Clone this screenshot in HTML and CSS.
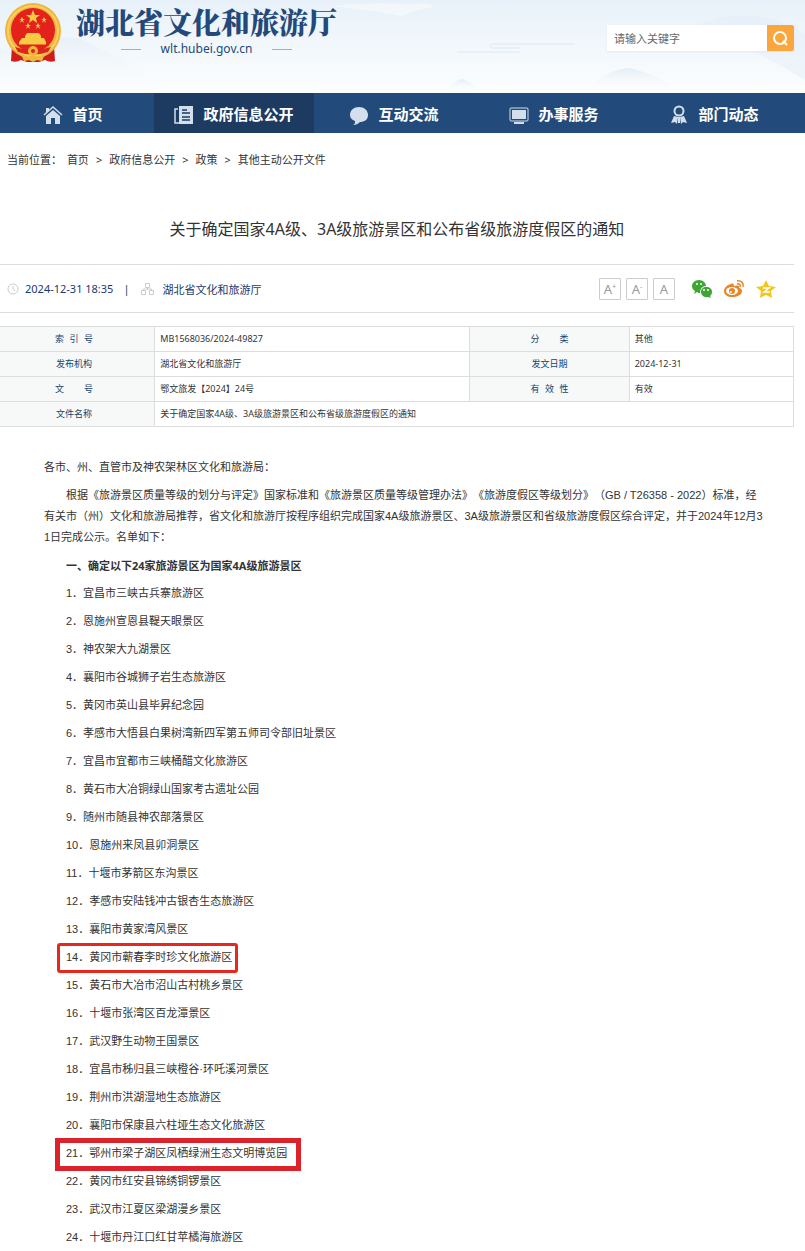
FILE: index.html
```
<!DOCTYPE html>
<html lang="zh-CN">
<head>
	<meta charset="UTF-8">
	<title>关于确定国家4A级、3A级旅游景区和公布省级旅游度假区的通知</title>
	<link rel="stylesheet" href="styles.css">
</head>
<body>
	<div class="header">
		<svg class="header-bg" viewBox="0 0 805 93" preserveAspectRatio="none" aria-hidden="true">
			<defs>
				<linearGradient id="sky" x1="0" y1="0" x2="0" y2="1">
					<stop offset="0" stop-color="#e8f1f9"/>
					<stop offset="0.55" stop-color="#f3f8fc"/>
					<stop offset="1" stop-color="#fcfefe"/>
				</linearGradient>
				<linearGradient id="hill" x1="0" y1="0" x2="0" y2="1">
					<stop offset="0" stop-color="#e3edf6"/>
					<stop offset="1" stop-color="#fafdfe" stop-opacity="0"/>
				</linearGradient>
			</defs>
			<rect width="805" height="93" fill="url(#sky)"/>
			<path d="M0 50Q40 34 78 38Q120 56 180 93H0z" fill="url(#hill)" opacity="0.6"/>
			<path d="M590 88Q605 70 630 68Q655 74 680 90z" fill="url(#hill)"/>
			<path d="M445 90Q455 80 462 79Q472 82 482 91z" fill="url(#hill)"/>
			<path d="M690 28Q750 0 805 34V80Q740 40 690 28z" fill="#e2ecf8" opacity="0.4"/>
			<path d="M330 6Q370 2 405 4Q440 2 430 8Q412 10 402 16Q370 10 330 6z" fill="#fff" opacity="0.4"/>
			<path d="M575 44H492Q487 46 492 48H520M457 52H520" fill="none" stroke="#e0e8ef"/>
		</svg>
		<a class="logo" href="#">
			<svg class="emblem" viewBox="0 0 56 60" aria-hidden="true">
				<path d="M7 43L6 58Q11 60 16 57L22 59H34L40 57Q45 60 50 58L49 43z" fill="#cf1d1c"/>
				<circle cx="28" cy="28" r="28" fill="#efb63f"/>
				<circle cx="28" cy="28" r="25" fill="none" stroke="#f9cf62" stroke-width="2"/>
				<circle cx="28" cy="27" r="22" fill="#e3231b"/>
				<path d="M28 7l2 5h5l-4 3 1 5-4-3-4 3 1-5-4-3h5z" fill="#f8ca45"/>
				<path d="M17 14l1 2h2l-2 1 1 3-2-2-2 2 1-3-2-1h2zM39 14l1 2h2l-2 1 1 3-2-2-2 2 1-3-2-1h2zM23 20l1 2h2l-2 1 1 3-2-2-2 2 1-3-2-1h2zM33 20l1 2h2l-2 1 1 3-2-2-2 2 1-3-2-1h2z" fill="#f8ca45"/>
				<path d="M20 33l2-3h12l2 3v2h3l2 4v3H14v-3l3-4h3z" fill="#f8ca45"/>
				<path d="M12 42h32" stroke="#e3231b"/>
				<path d="M10 44Q28 50 46 44L43 49Q28 54 13 49z" fill="#dd251c"/>
				<circle cx="28" cy="48" r="5" fill="#f1b63c"/>
				<circle cx="28" cy="48" r="2" fill="#dd251c"/>
				<path d="M16 51l7 3 5-2 5 2 7-3-3 7-5-1-4 2-4-2-5 1z" fill="#f1b63c"/>
			</svg>
			<span class="site">
				<strong>湖北省文化和旅游厅</strong>
				<span class="domain">wlt.hubei.gov.cn</span>
			</span>
		</a>
		<form class="search" action="#">
			<input type="text" placeholder="请输入关键字" aria-label="请输入关键字">
			<button type="button" aria-label="搜索">
				<svg width="17" height="17" viewBox="0 0 17 17"><circle cx="8" cy="8" r="6" fill="none" stroke="#fff" stroke-width="2"/><path d="M11 11l4 4" stroke="#fff" stroke-width="2"/></svg>
			</button>
		</form>
	</div>

	<div class="nav">
		<a href="#">
			<svg width="20" height="20" viewBox="0 0 20 20"><path d="M1 10L10 2l9 8" fill="none" stroke="#d3dfec" stroke-width="1.5"/><path d="M3 3h3v3L3 8zM3 11l7-6 7 6v8h-5v-6H8v6H3z" fill="#d3dfec"/></svg>
			首页
		</a>
		<a href="#" class="on">
			<svg width="20" height="20" viewBox="0 0 20 20"><path d="M4 4H1v14h4" fill="none" stroke="#d3dfec" stroke-width="1.5"/><path d="M5 1h14v18H5z" fill="#d3dfec"/><path d="M8 5h5M8 8h8M8 12h8M8 15h8" stroke="#1d3b61" stroke-width="1.5"/></svg>
			政府信息公开
		</a>
		<a href="#">
			<svg width="20" height="20" viewBox="0 0 20 20"><path d="M10 2c5 0 9 3 9 8s-4 7-8 7c-2 2-4 3-7 3 2-1 2-2 2-4-3-1-5-3-5-6 0-5 4-8 9-8z" fill="#d3dfec"/></svg>
			互动交流
		</a>
		<a href="#">
			<svg width="20" height="20" viewBox="0 0 20 20"><rect x="1" y="3" width="18" height="13" rx="1" fill="none" stroke="#d3dfec"/><path d="M3 5h14v9H3zM5 17h10v2H5z" fill="#d3dfec"/></svg>
			办事服务
		</a>
		<a href="#">
			<svg width="20" height="20" viewBox="0 0 20 20"><circle cx="10" cy="6" r="4.5" fill="none" stroke="#d3dfec" stroke-width="2"/><path d="M5 11l4 1-1 7-2-2-4 1zM15 11l-4 1 1 7 2-2 4 1zM9 12h2v6H9z" fill="#d3dfec"/></svg>
			部门动态
		</a>
	</div>

	<div class="main">
		<div class="crumb">
			<span>当前位置：</span>
			<a href="#">首页</a><i>&gt;</i><a href="#">政府信息公开</a><i>&gt;</i><a href="#">政策</a><i>&gt;</i><a href="#">其他主动公开文件</a>
		</div>
		<h1>关于确定国家4A级、3A级旅游景区和公布省级旅游度假区的通知</h1>

		<div class="info">
			<svg width="12" height="12" viewBox="0 0 12 12"><circle cx="6" cy="6" r="5" fill="none" stroke="#ccc"/><path d="M6 3v3l2 2" fill="none" stroke="#ccc"/></svg>
			<span class="date">2024-12-31 18:35</span>
			<span class="bar">|</span>
			<svg width="13" height="12" viewBox="0 0 13 12"><path d="M4.500.5h4v4h-4zM.5 7.500h4v4h-4zM8.500 7.500h4v4h-4zM6.500 5v2M2.500 7V6h8v1" fill="none" stroke="#ccc"/></svg>
			<span class="from">湖北省文化和旅游厅</span>
			<div class="tools">
				<button type="button">A<sup>+</sup></button>
				<button type="button">A<sup>-</sup></button>
				<button type="button">A</button>
			</div>
			<div class="share">
				<a href="#" aria-label="微信"><svg width="22" height="20" viewBox="0 0 22 20"><path d="M8 1c4 0 7 3 7 6-4 0-6 3-6 7-1 0-2 0-3-1l-3 2 1-3C2 11 1 9 1 7c0-3 3-6 7-6z" fill="#3fa535"/><path d="M15 8c4 0 6 2 6 5 0 2-1 3-2 4l1 2-3-1c-4 1-7-2-7-5s2-5 5-5z" fill="#3fa535"/><g fill="#fff"><circle cx="6" cy="5" r="1"/><circle cx="10" cy="5" r="1"/><circle cx="13" cy="11" r="1"/><circle cx="17" cy="11" r="1"/></g></svg></a>
				<a href="#" aria-label="微博"><svg width="22" height="20" viewBox="0 0 22 20"><path d="M8 5c2-1 3 0 3 2 3-1 6-1 5 2 2 0 3 2 3 3 0 4-5 6-10 6-4 0-8-2-8-6 0-3 3-6 7-7z" fill="#e6852a"/><ellipse cx="9" cy="12" rx="6" ry="4" fill="#fff"/><circle cx="9" cy="12" r="3" fill="#e6852a"/><circle cx="8" cy="13" r="1" fill="#fff"/><path d="M14 2c4-1 7 2 6 6M14 5c2-1 4 1 3 3" fill="none" stroke="#e6852a" stroke-width="1.500"/></svg></a>
				<a href="#" aria-label="QQ空间"><svg width="22" height="20" viewBox="0 0 22 20"><path d="M11 1l3 6 7 1-5 4 1 7-6-3-6 3 1-7-5-4 7-1z" fill="#f5c51f"/><path d="M8 9h6l-5 4h6" fill="none" stroke="#fff" stroke-width="1.500"/></svg></a>
			</div>
		</div>

		<table>
			<colgroup><col class="c1"><col class="c2"><col class="c3"><col class="c4"></colgroup>
			<tr>
				<th><span><b>索</b><b>引</b><b>号</b></span></th>
				<td>MB1568036/2024-49827</td>
				<th><span><b>分</b><b>类</b></span></th>
				<td>其他</td>
			</tr>
			<tr>
				<th>发布机构</th>
				<td>湖北省文化和旅游厅</td>
				<th>发文日期</th>
				<td>2024-12-31</td>
			</tr>
			<tr>
				<th><span><b>文</b><b>号</b></span></th>
				<td>鄂文旅发【2024】24号</td>
				<th><span><b>有</b><b>效</b><b>性</b></span></th>
				<td>有效</td>
			</tr>
			<tr>
				<th>文件名称</th>
				<td colspan="3">关于确定国家4A级、3A级旅游景区和公布省级旅游度假区的通知</td>
			</tr>
		</table>

		<div class="content">
			<p class="noindent">各市、州、直管市及神农架林区文化和旅游局：</p>
			<p>根据《旅游景区质量等级的划分与评定》国家标准和《旅游景区质量等级管理办法》《旅游度假区等级划分》（GB / T26358 - 2022）标准，经有关市（州）文化和旅游局推荐，省文化和旅游厅按程序组织完成国家4A级旅游景区、3A级旅游景区和省级旅游度假区综合评定，并于2024年12月31日完成公示。名单如下：</p>
			<p class="sub">一、确定以下24家旅游景区为国家4A级旅游景区</p>
			<p>1．宜昌市三峡古兵寨旅游区</p>
			<p>2．恩施州宣恩县鞮天眼景区</p>
			<p>3．神农架大九湖景区</p>
			<p>4．襄阳市谷城狮子岩生态旅游区</p>
			<p>5．黄冈市英山县毕昇纪念园</p>
			<p>6．孝感市大悟县白果树湾新四军第五师司令部旧址景区</p>
			<p>7．宜昌市宜都市三峡桶醋文化旅游区</p>
			<p>8．黄石市大冶铜绿山国家考古遗址公园</p>
			<p>9．随州市随县神农部落景区</p>
			<p>10．恩施州来凤县卯洞景区</p>
			<p>11．十堰市茅箭区东沟景区</p>
			<p>12．孝感市安陆钱冲古银杏生态旅游区</p>
			<p>13．襄阳市黄家湾风景区</p>
			<p><span class="box">14．黄冈市蕲春李时珍文化旅游区</span></p>
			<p>15．黄石市大冶市沼山古村桃乡景区</p>
			<p>16．十堰市张湾区百龙潭景区</p>
			<p>17．武汉野生动物王国景区</p>
			<p>18．宜昌市秭归县三峡橙谷·环吒溪河景区</p>
			<p>19．荆州市洪湖湿地生态旅游区</p>
			<p>20．襄阳市保康县六柱垭生态文化旅游区</p>
			<p><span class="box thick">21．鄂州市梁子湖区凤栖绿洲生态文明博览园</span></p>
			<p>22．黄冈市红安县锦绣铜锣景区</p>
			<p>23．武汉市江夏区梁湖漫乡景区</p>
			<p>24．十堰市丹江口红甘苹橘海旅游区</p>
		</div>
	</div>
</body>
</html>
```
FILE: styles.css
```
body, h1, p, form {
	margin: 0;
	padding: 0;
}

body {
	font-family: "Noto Sans", "Noto Sans CJK SC", sans-serif;
	font-size: 11px;
	color: #333;
	background: #fff;
	text-spacing-trim: space-all;
}

a {
	color: inherit;
	text-decoration: none;
}

svg {
	flex: none;
	display: block;
}

/* 头部 */
.header {
	position: relative;
	display: flex;
	justify-content: space-between;
	align-items: flex-start;
	height: 93px;
	padding: 0 11px 0 5px;
	box-sizing: border-box;
}

.header-bg {
	position: absolute;
	left: 0;
	top: 0;
	width: 100%;
	height: 100%;
}

.logo {
	position: relative;
	display: flex;
	gap: 15px;
	padding-top: 3px;
	color: #23487a;
}

.emblem {
	width: 56px;
	height: 60px;
}

.site strong {
	display: block;
	font-family: "Noto Serif CJK SC", "Noto Sans CJK SC", serif;
	font-size: 29px;
	font-weight: 900;
	line-height: 38px;
}

.domain {
	display: flex;
	justify-content: center;
	align-items: center;
	gap: 20px;
	font-size: 12px;
	line-height: 16px;
}

.domain::before,
.domain::after {
	content: "";
	width: 20px;
	height: 1px;
	background: #9fb0c4;
}

.search {
	position: relative;
	display: flex;
	margin-top: 25px;
	box-shadow: 0 1px 2px #e3e8ee;
}

.search input {
	width: 160px;
	height: 26px;
	padding: 0 7px;
	border: 0;
	box-sizing: border-box;
	background: #fff;
	font: inherit;
}

.search input::placeholder {
	color: #666;
}

.search button {
	display: flex;
	justify-content: center;
	align-items: center;
	width: 27px;
	height: 26px;
	padding: 0;
	border: 0;
	border-radius: 0 2px 2px 0;
	background: #faa63c;
}

/* 导航 */
.nav {
	display: flex;
	height: 40px;
	padding-right: 11px;
	background: #224b7b;
}

.nav a {
	flex: 160 1 0;
	display: flex;
	justify-content: center;
	align-items: center;
	gap: 9px;
	box-sizing: border-box;
	color: #fff;
	font-size: 15px;
	font-weight: bold;
}

/* 首页一栏比其余的窄 */
.nav a:first-child {
	flex-grow: 146;
	padding-right: 8px;
}

.nav svg {
	margin-top: 4px;
}

.nav .on {
	background: #1d3b61;
}

.main {
	margin-right: 11px;
}

.crumb {
	padding: 17px 7px 0;
	line-height: 20px;
}

.crumb span {
	margin-right: 2px;
}

.crumb i {
	margin: 0 7px;
	font-style: normal;
}

h1 {
	padding: 49px 0 24px;
	font-size: 16px;
	font-weight: normal;
	line-height: 21px;
	text-align: center;
}

.info {
	display: flex;
	align-items: center;
	height: 47px;
	padding: 0 17px 0 7px;
	border-top: 1px solid #ddd;
	border-bottom: 1px solid #ddd;
	color: #1c3a70;
}

.info .date {
	margin-left: 6px;
}

.info .bar {
	margin: 0 12px 0 10px;
}

.info .from {
	margin-left: 8px;
}

.tools {
	display: flex;
	gap: 5px;
	margin-left: auto;
}

.tools button {
	width: 22px;
	height: 22px;
	padding: 0;
	border: 1px solid #ccc;
	border-radius: 1px;
	background: #fff;
	color: #999;
	font-family: inherit;
	font-size: 13px;
	line-height: 20px;
}

.tools sup {
	font-size: 7px;
	line-height: 0;
}

.share {
	display: flex;
	gap: 10px;
	margin-left: 16px;
}

/* 索引表 */
table {
	width: 100%;
	margin-top: 13px;
	border-collapse: collapse;
	table-layout: fixed;
	font-size: 9px;
}

.c1 {
	width: 19.5%;
}

.c2 {
	width: 39.7%;
}

.c3 {
	width: 20.1%;
}

th, td {
	height: 24px;
	padding: 0 5px;
	border: 1px solid #ddd;
	line-height: 14px;
}

th {
	background: #f7f8f8;
	color: #15456f;
	font-weight: normal;
}

th:first-child {
	padding-right: 11px;
	border-left: 0;
}

th span {
	display: flex;
	justify-content: space-between;
	width: 38px;
	margin: 0 auto;
}

th b {
	font-weight: normal;
}

/* 正文 */
.content {
	padding: 30px 29px 3px 44px;
	font-family: "Liberation Sans", "Noto Sans CJK SC", sans-serif;
	line-height: 21px;
}

.content p {
	margin-bottom: 7px;
	text-indent: 2em;
	word-break: break-all;
}

.content p:last-child {
	margin-bottom: 0;
}

.content .noindent {
	text-indent: 0;
}

.content .sub {
	font-family: "Noto Sans", "Noto Sans CJK SC", sans-serif;
	font-weight: bold;
}

.box {
	position: relative;
}

.box::after {
	content: "";
	position: absolute;
	top: -8px;
	right: -6px;
	bottom: -10px;
	left: -9px;
	border: 3px solid #e8281e;
	border-radius: 3px;
}

.thick::after {
	top: -9px;
	right: -14px;
	bottom: -12px;
	left: -11px;
	border: 5px solid #dc232b;
	border-radius: 0;
}
```
